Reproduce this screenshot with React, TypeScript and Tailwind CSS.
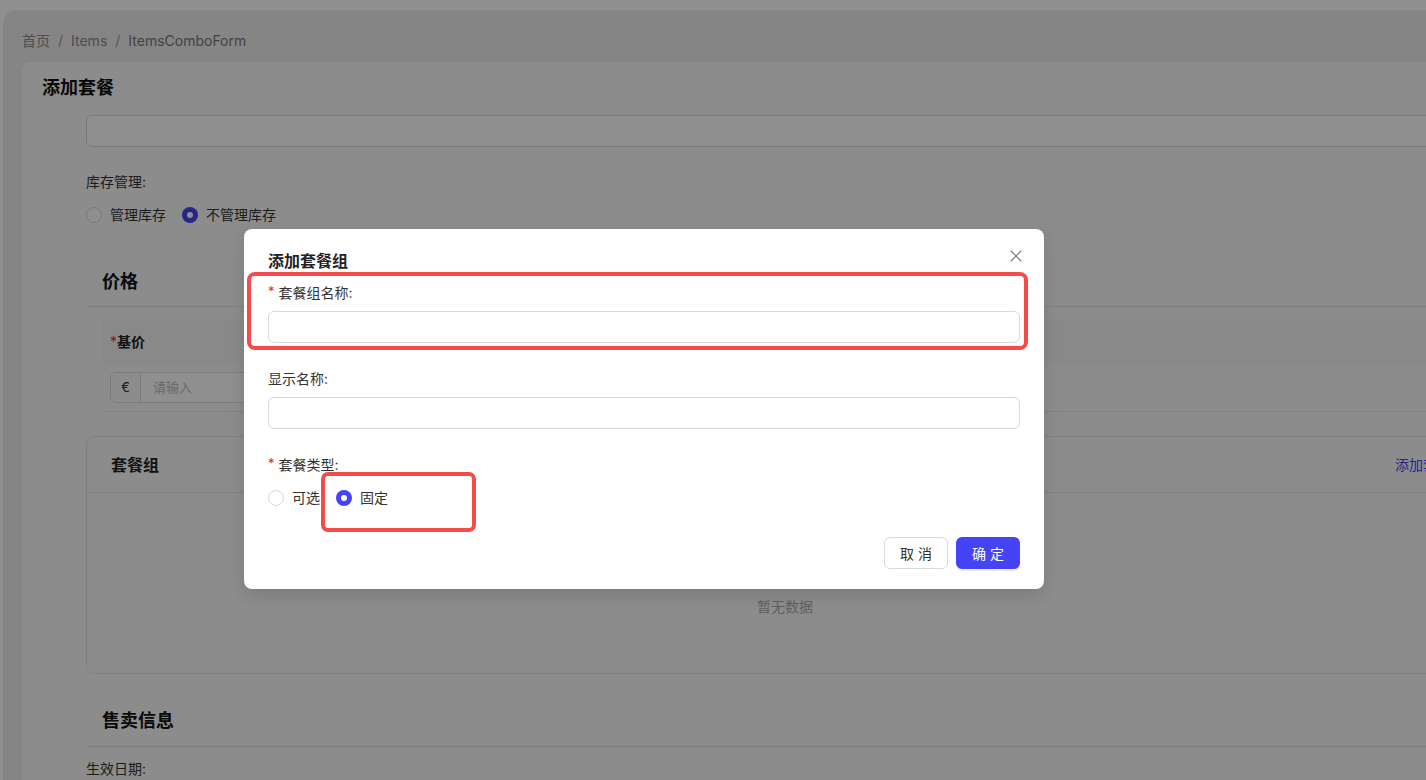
import { X } from "lucide-react";

const fontStack = "font-['Inter','Noto_Sans_CJK_SC',sans-serif]";

function Radio({ checked, label }: { checked?: boolean; label: string }) {
  return (
    <label className="flex items-center gap-2">
      {checked ? (
        <span className="flex size-4 items-center justify-center rounded-full bg-[#4642f5]">
          <span className="size-[6px] rounded-full bg-white" />
        </span>
      ) : (
        <span className="size-4 rounded-full border border-[#d9d9d9] bg-white" />
      )}
      <span className="text-[14px] leading-5 text-[#333]">{label}</span>
    </label>
  );
}

function FieldLabel({ text, required }: { text: string; required?: boolean }) {
  return (
    <div className="flex h-5 items-center text-[14px] text-[#333]">
      {required ? <span className="mr-1 text-[13px] text-[#f5222d]">*</span> : null}
      {text}:
    </div>
  );
}

function PageBehind() {
  return (
    <div className="ml-[3px] mt-[10px] h-[770px] rounded-tl-[14px] bg-[#ededef] pl-[19px] pt-[22px]">
      <div className="flex h-[18px] items-center gap-2 text-[14px] leading-[18px] text-[#8a8a8a]">
        <span>首页</span>
        <span className="text-[#9a9a9a]">/</span>
        <span>Items</span>
        <span className="text-[#9a9a9a]">/</span>
        <span className="text-[#777]">ItemsComboForm</span>
      </div>

      <div className="mt-[12px] h-[720px] w-[1480px] rounded-tl-[8px] bg-[#fafafa] px-5 pt-[14px]">
        <h1 className="text-[18px] font-bold leading-6 text-[#111]">添加套餐</h1>

        <div className="ml-[44px]">
          <div className="mt-[15px] h-8 rounded-[6px] border border-[#d9d9d9] bg-white" />

          <div className="mt-[25px] h-5 text-[14px] leading-5 text-[#333]">库存管理:</div>
          <div className="mt-[13px] flex h-5 items-center gap-4">
            <Radio label="管理库存" />
            <Radio checked label="不管理库存" />
          </div>

          <div className="mt-[45px] border-b border-[#e5e5e5] pb-3 pl-4">
            <h2 className="text-[18px] font-bold leading-6 text-[#111]">价格</h2>
          </div>
          <div className="ml-4 mt-3 flex h-[45px] items-center bg-[#f5f5f6] pl-2 text-[14px] font-bold text-[#222]">
            <span className="font-normal text-[#f5222d]">*</span>基价
          </div>
          <div className="ml-4 border-b border-[#e8e8e8] pb-2 pl-2 pt-2">
            <div className="flex h-[31px] w-[300px] overflow-hidden rounded-[6px] border border-[#d9d9d9] bg-white text-[13px]">
              <span className="flex w-[30px] items-center justify-center border-r border-[#d9d9d9] bg-[#fafafa] text-[#333]">
                €
              </span>
              <span className="flex items-center pl-3 text-[#bbb]">请输入</span>
            </div>
          </div>

          <div className="mt-6 h-[238px] w-[1398px] rounded-[8px] border border-[#e3e3e3] bg-[#fafafa]">
            <div className="flex h-[56px] items-center justify-between border-b border-[#e5e5e5] pl-6 pr-[18px]">
              <span className="text-[16px] font-bold text-[#222]">套餐组</span>
              <span className="text-[14px] text-[#4642f5]">添加套餐组</span>
            </div>
            <div className="pt-[104px] text-center text-[14px] leading-5 text-[#aaa]">暂无数据</div>
          </div>

          <div className="mt-[35px] border-b border-[#e5e5e5] pb-[13px] pl-4">
            <h2 className="text-[18px] font-bold leading-6 text-[#111]">售卖信息</h2>
          </div>
          <div className="mt-3 h-5 text-[14px] leading-5 text-[#333]">生效日期:</div>
        </div>
      </div>
    </div>
  );
}

function ComboGroupModal() {
  return (
    <div className="absolute left-[244px] top-[229px] h-[360px] w-[800px] rounded-[8px] bg-white px-6 pt-[21px] shadow-[0_6px_16px_rgba(0,0,0,0.12)]">
      <button
        type="button"
        className="absolute right-[18px] top-[17px] text-[#777]"
        aria-label="关闭"
      >
        <X className="size-[20px]" strokeWidth={1.3} />
      </button>

      <h3 className="text-[16px] font-bold leading-[22px] text-[#222]">添加套餐组</h3>

      <div className="mt-[10px]">
        <FieldLabel required text="套餐组名称" />
      </div>
      <div className="mt-[9px] h-8 rounded-[6px] border border-[#d9d9d9]" />

      <div className="mt-[25px]">
        <FieldLabel text="显示名称" />
      </div>
      <div className="mt-[9px] h-8 rounded-[6px] border border-[#d9d9d9]" />

      <div className="mt-[25px]">
        <FieldLabel required text="套餐类型" />
      </div>
      <div className="mt-[14px] flex h-5 items-center gap-4">
        <Radio label="可选" />
        <Radio checked label="固定" />
      </div>

      <div className="mt-[29px] flex justify-end gap-2">
        <button
          type="button"
          className="h-8 w-16 rounded-[6px] border border-[#d9d9d9] bg-white text-[14px] text-[#333]"
        >
          取 消
        </button>
        <button
          type="button"
          className="h-8 w-16 rounded-[6px] bg-[#4642f5] text-[14px] text-white shadow-[0_2px_0_rgba(70,66,245,0.1)]"
        >
          确 定
        </button>
      </div>

      {/* annotation boxes */}
      <div className="pointer-events-none absolute left-[3px] top-[43px] h-[78px] w-[781px] rounded-[8px] border-4 border-[#f24c4c]" />
      <div className="pointer-events-none absolute left-[77px] top-[243px] h-[60px] w-[155px] rounded-[7px] border-4 border-[#f24c4c]" />
    </div>
  );
}

export default function App() {
  return (
    <div className={`relative h-[780px] w-[1426px] overflow-hidden bg-white ${fontStack}`}>
      <PageBehind />
      <div className="absolute inset-0 bg-black/[0.44]" />
      <ComboGroupModal />
    </div>
  );
}
